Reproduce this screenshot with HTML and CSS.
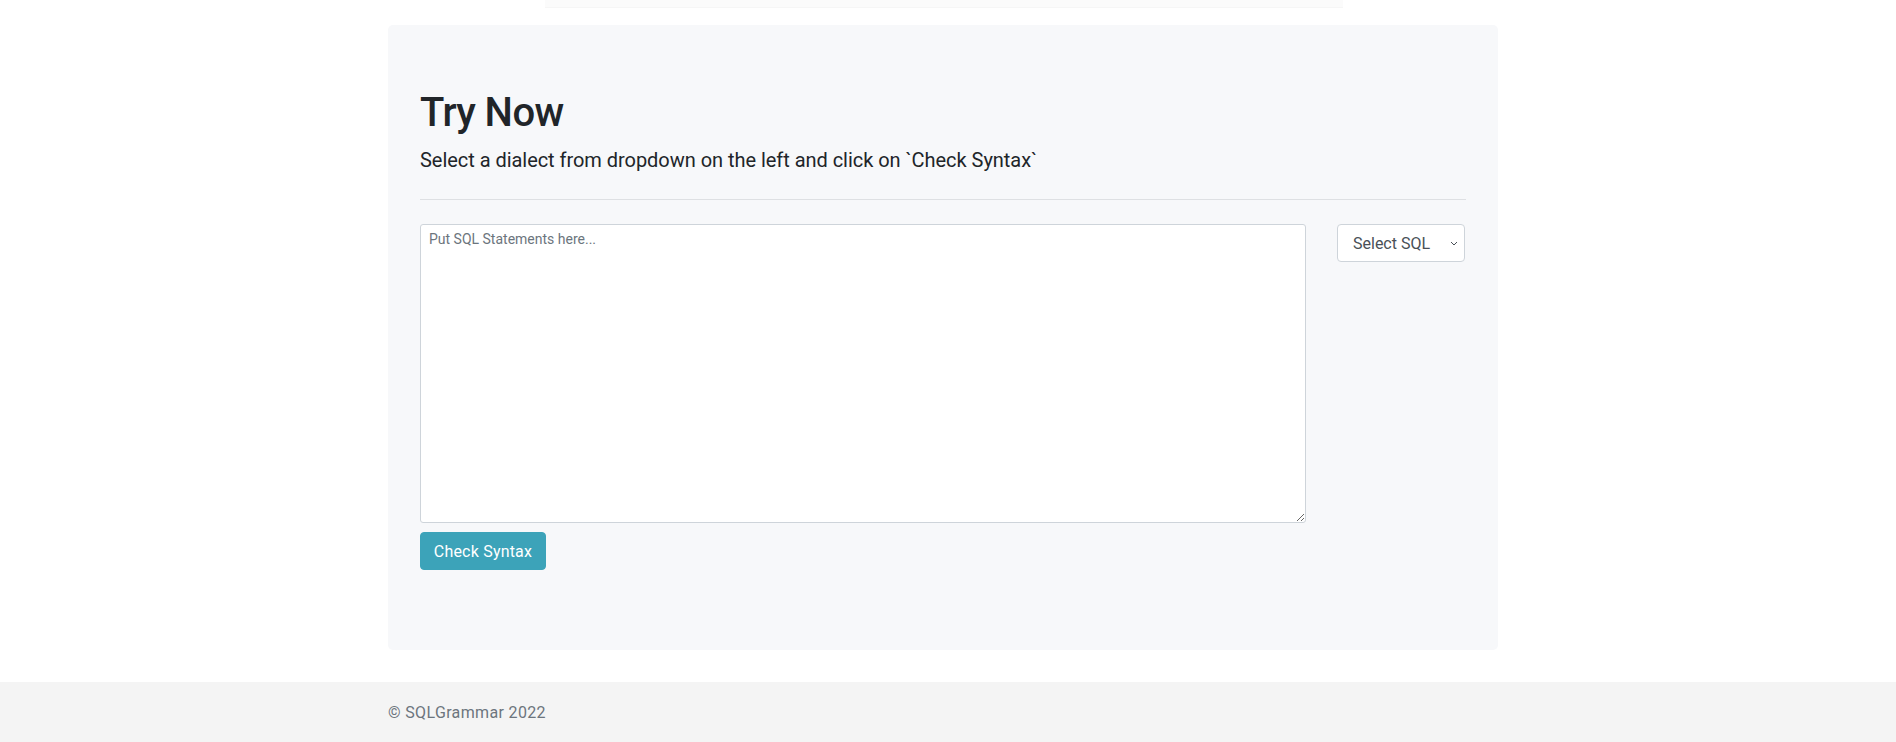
FILE: index.html
```html
<!DOCTYPE html>
<html lang="en">
<head>
<meta charset="utf-8">
<title>SQLGrammar - Try Now</title>
<link rel="stylesheet" href="styles.css">
</head>
<body>
<div class="page">
  <div class="top-strip"></div>
  <main class="container">
    <section class="jumbotron">
      <h1 class="title">Try Now</h1>
      <p class="lead">Select a dialect from dropdown on the left and click on `Check Syntax`</p>
      <hr class="divider">
      <form class="check-form">
        <div class="editor-row">
          <div class="editor-col">
            <textarea class="sql-input" placeholder="Put SQL Statements here..."></textarea>
            <button type="button" class="btn-check">Check Syntax</button>
          </div>
          <select class="dialect-select">
            <option>Select SQL</option>
          </select>
        </div>
      </form>
    </section>
  </main>
  <footer class="footer">
    <div class="container footer-inner">© SQLGrammar 2022</div>
  </footer>
</div>
</body>
</html>
```

FILE: styles.css
```css
* { box-sizing: border-box; }

html, body {
  margin: 0;
  padding: 0;
  height: 742px;
  overflow: hidden;
  background: #ffffff;
  font-family: Roboto, "Helvetica Neue", Arial, sans-serif;
  color: #212529;
}

.page {
  display: flex;
  flex-direction: column;
  height: 742px;
}

.top-strip {
  height: 8px;
  width: 798px;
  margin-left: 545px;
  background: #fbfbfb;
  border-bottom: 1px solid #f6f6f6;
  margin-bottom: 17px;
}

.container {
  width: 1110px;
  margin-left: calc(50% - 560px);
}

.jumbotron {
  background: #f7f8fa;
  border-radius: 5px;
  padding: 64px 32px 80px;
  margin-bottom: 32px;
}

.title {
  margin: 0 0 8px;
  font-size: 40px;
  line-height: 48px;
  font-weight: 500;
  letter-spacing: -0.6px;
  color: #212529;
}

.lead {
  margin: 0;
  font-size: 20px;
  line-height: 30px;
  font-weight: 400;
  letter-spacing: -0.04px;
  color: #212529;
}

.divider {
  margin: 24px 0;
  border: 0;
  border-top: 1px solid #dee0e3;
}

.check-form { margin: 0; }

.editor-row {
  display: flex;
  justify-content: space-between;
  align-items: flex-start;
}

.editor-col {
  display: flex;
  flex-direction: column;
  align-items: flex-start;
  gap: 9px;
}

.sql-input {
  width: 886px;
  height: 299px;
  border: 1px solid #ced4da;
  border-radius: 3px;
  background: #ffffff;
  padding: 4px 8px;
  font-family: Roboto, "Helvetica Neue", Arial, sans-serif;
  font-size: 14px;
  line-height: 21px;
  color: #495057;
  resize: both;
}

.sql-input::placeholder {
  color: #6c757d;
  opacity: 1;
}

.btn-check {
  width: 126px;
  height: 38px;
  border: 1px solid #3ca3b9;
  border-radius: 4px;
  background: #3ca3b9;
  color: #ffffff;
  font-family: Roboto, "Helvetica Neue", Arial, sans-serif;
  font-size: 16px;
  letter-spacing: 0.2px;
  padding: 0;
  cursor: pointer;
}

.dialect-select {
  width: 128px;
  height: 38px;
  margin-right: 1px;
  border: 1px solid #ced4da;
  border-radius: 4px;
  background-color: #ffffff;
  background-image: url("data:image/svg+xml,%3Csvg xmlns='http://www.w3.org/2000/svg' width='8' height='5' viewBox='0 0 8 5'%3E%3Cpath d='M1 1l3 3 3-3' fill='none' stroke='%23495057' stroke-width='1'/%3E%3C/svg%3E");
  background-repeat: no-repeat;
  background-position: right 6px center;
  background-size: 8px 5px;
  -webkit-appearance: none;
  appearance: none;
  padding: 0 0 0 15px;
  font-family: Roboto, "Helvetica Neue", Arial, sans-serif;
  font-size: 16px;
  color: #495057;
}

.footer {
  height: 60px;
  flex: 0 0 60px;
  margin-top: auto;
  background: #f4f4f4;
}

.footer-inner {
  line-height: 62px;
  font-size: 16px;
  letter-spacing: 0.35px;
  color: #6c757d;
}
```
